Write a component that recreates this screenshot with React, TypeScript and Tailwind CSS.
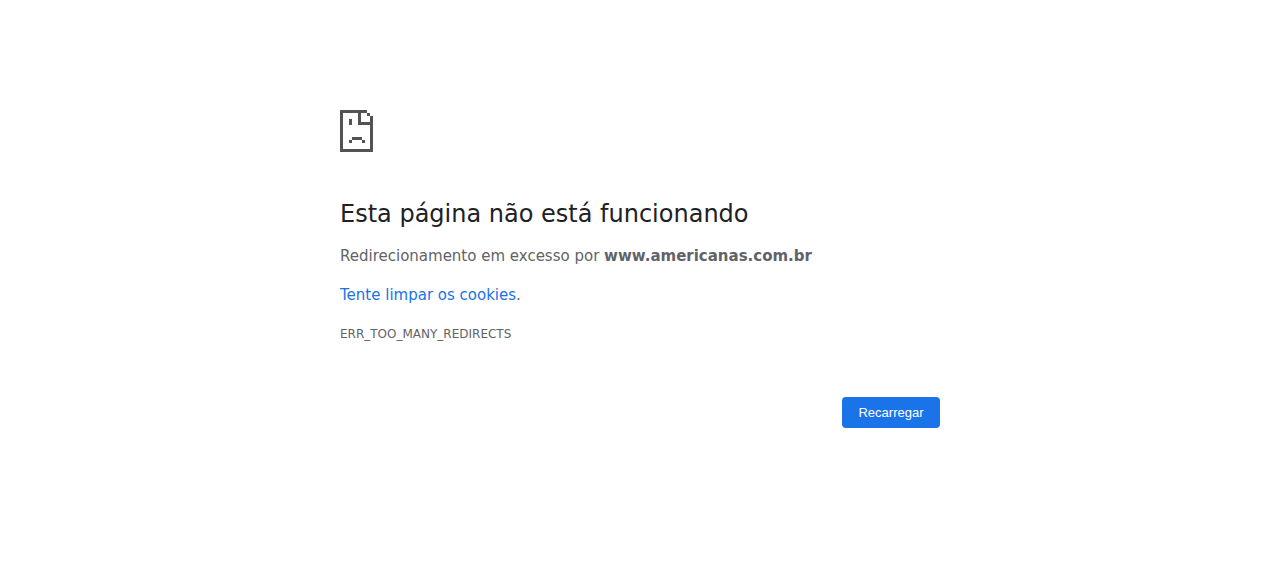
export default function App() {
  return (
    <main className="mx-auto max-w-[600px] pt-[110px] font-['DejaVu_Sans',sans-serif] text-[15px] leading-6 text-[#5f6368]">
      <svg
        className="block h-[42px] w-[33px] fill-[#535353]"
        viewBox="0 0 33 42"
        shapeRendering="crispEdges"
        aria-hidden="true"
      >
        <path d="M0 0h27v3H3v36h27V15H18V3h3v9h9V6h3v36H0z" />
        <path d="M27 3h3v3h-3zM9 9h3v6H9zM12 27h10v3H12zM9 30h3v3H9zM22 30h3v3h-3z" />
      </svg>
      <h1 className="mt-[47px] text-2xl leading-[30px] font-medium text-[#202124]">
        Esta página não está funcionando
      </h1>
      <p className="mt-[15px]">
        Redirecionamento em excesso por <strong>www.americanas.com.br</strong>
      </p>
      <p className="mt-[15px]">
        <a href="#cookies" className="text-[#1a73e8]">
          Tente limpar os cookies
        </a>
        .
      </p>
      <p className="mt-[15px] text-xs leading-6">ERR_TOO_MANY_REDIRECTS</p>
      <div className="mt-[51px] flex justify-end">
        <button
          type="button"
          className="min-w-[98px] rounded-sm bg-[#1a73e8] px-4 py-2 font-['Liberation_Sans',sans-serif] text-[13px] leading-[15px] text-white"
        >
          Recarregar
        </button>
      </div>
    </main>
  );
}
